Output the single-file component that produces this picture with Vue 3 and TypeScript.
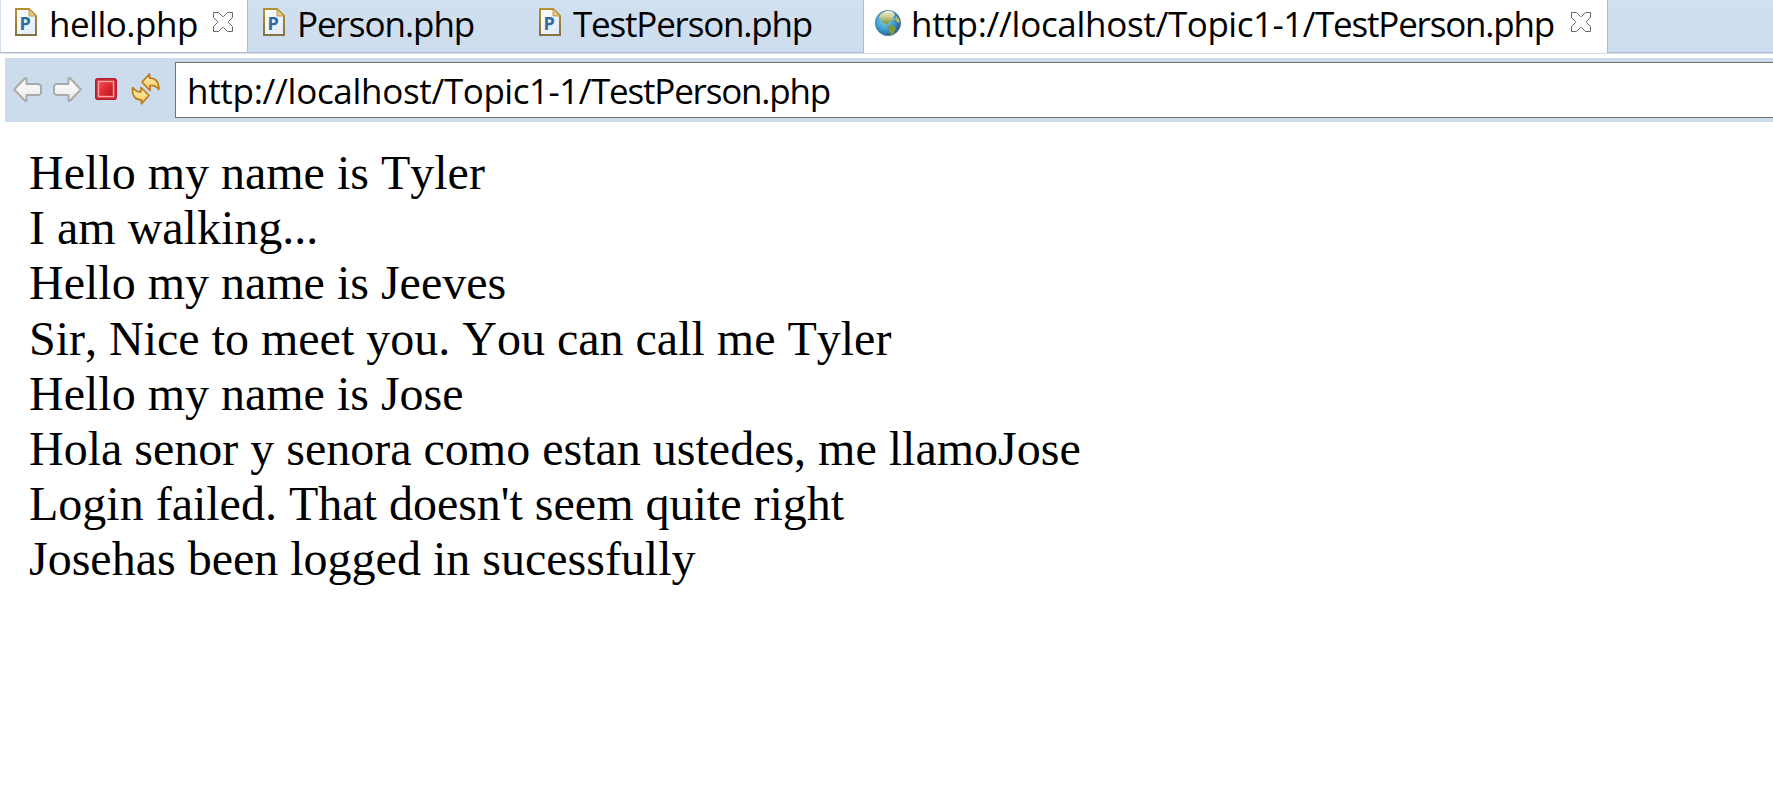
<script setup lang="ts">
interface Part {
  text: string
  cls: string
}
interface Tab {
  parts: Part[]
  kind: 'php' | 'web'
  cls: string
  closable: boolean
}

const url: Part[] = [
  { text: 'http://localhost/', cls: 'host' },
  { text: 'Topic1-1/', cls: 'folder' },
  { text: 'TestPerson.php', cls: 'script' },
]

const tabs: Tab[] = [
  { parts: [{ text: 'hello.php', cls: 'folder' }], kind: 'php', cls: 'hello', closable: true },
  { parts: [{ text: 'Person.php', cls: 'short' }], kind: 'php', cls: 'person', closable: false },
  { parts: [{ text: 'TestPerson.php', cls: 'script' }], kind: 'php', cls: 'test', closable: false },
  { parts: url, kind: 'web', cls: 'browser', closable: true },
]

const output: string[] = [
  'Hello my name is Tyler',
  'I am walking...',
  'Hello my name is Jeeves',
  'Sir, Nice to meet you. You can call me Tyler',
  'Hello my name is Jose',
  'Hola senor y senora como estan ustedes, me llamoJose',
  "Login failed. That doesn't seem quite right",
  'Josehas been logged in sucessfully',
]
</script>

<template>
  <div class="window">
    <svg class="defs" width="0" height="0" aria-hidden="true">
      <defs>
        <linearGradient id="page" x1="0" y1="0" x2="1" y2="1">
          <stop offset="0" stop-color="#fff" /><stop offset="1" stop-color="#dfe9f8" />
        </linearGradient>
        <linearGradient id="edge" x1="0" y1="0" x2="0" y2="1">
          <stop offset="0" stop-color="#b8902f" /><stop offset="1" stop-color="#857440" />
        </linearGradient>
        <radialGradient id="sea" cx=".38" cy=".4" r=".65">
          <stop offset="0" stop-color="#8fd3ee" /><stop offset=".55" stop-color="#3e9fd0" /><stop offset="1" stop-color="#28598f" />
        </radialGradient>
        <linearGradient id="land" x1="0" y1="0" x2="0" y2="1">
          <stop offset="0" stop-color="#f2f1dd" /><stop offset=".45" stop-color="#c9cb91" /><stop offset="1" stop-color="#6d8b2c" />
        </linearGradient>
        <linearGradient id="arrow" x1="0" y1="0" x2="0" y2="1">
          <stop offset="0" stop-color="#fff" /><stop offset="1" stop-color="#e9e9e9" />
        </linearGradient>
        <linearGradient id="red" x1="0" y1="0" x2="1" y2="1">
          <stop offset="0" stop-color="#f04a50" /><stop offset=".5" stop-color="#e02a34" /><stop offset="1" stop-color="#b5141f" />
        </linearGradient>
        <linearGradient id="gold" x1="0" y1="0" x2="0" y2="1">
          <stop offset="0" stop-color="#fff3c4" /><stop offset="1" stop-color="#f8c64c" />
        </linearGradient>
      </defs>
    </svg>

    <nav class="tabs">
      <div v-for="tab in tabs" :key="tab.cls" class="tab" :class="tab.cls">
        <svg v-if="tab.kind === 'php'" class="file" width="22" height="28" viewBox="0 0 22 28">
          <path d="M1 1H14L21 8V27H1Z" fill="url(#page)" stroke="url(#edge)" stroke-width="2" />
          <path d="M14 1L21 8H14Z" fill="#e5c88c" stroke="#b8902f" stroke-width=".8" />
          <text x="4.4" y="21.6" class="glyph">P</text>
        </svg>
        <svg v-else class="globe" width="26" height="26" viewBox="0 0 26 26">
          <circle cx="13" cy="13" r="12.6" fill="url(#sea)" stroke="#4b7396" stroke-width=".8" />
          <path d="M5 5Q9 1 14 .8L18 2L20 5L18 8L20 10L16 11L13 13L12 15L9 13L6 12L7 9L4 8Z" fill="url(#land)" />
          <path d="M13 16L17 15L21 18L19 23L16 25L14 21Z" fill="#7d9b34" />
          <path d="M21 6L24 9L25 13L22 12L20 9Z" fill="#b3b86c" />
        </svg>
        <span class="label"><span v-for="part in tab.parts" :key="part.text" :class="part.cls">{{ part.text }}</span></span>
        <svg v-if="tab.closable" class="close" width="20" height="20" viewBox="0 0 20 20">
          <path d="M.5 .5H5.5L9.5 4.5H10.5L14.5 .5H19.5V5.5L15.5 9.5V10.5L19.5 14.5V19.5H14.5L10.5 15.5H9.5L5.5 19.5H.5V14.5L4.5 10.5V9.5L.5 5.5Z" />
        </svg>
      </div>
      <div class="rest"></div>
    </nav>

    <div class="toolbar">
      <svg class="back" width="29" height="25" viewBox="0 0 29 25">
        <path d="M1.2 12.5L12 1.2H13.5V7H26L28 8.8V16.5L26 18H13.5V23.8H12Z" class="nav" />
      </svg>
      <svg class="forward" width="29" height="25" viewBox="0 0 29 25">
        <path d="M27.8 12.5L17 1.2H15.5V7H3L1 8.8V16.5L3 18H15.5V23.8H17Z" class="nav" />
      </svg>
      <svg class="stop" width="22" height="22" viewBox="0 0 22 22">
        <rect x=".8" y=".8" width="20.4" height="20.4" rx="2" fill="#d9343f" stroke="#b3202b" stroke-width="1.6" />
        <rect x="3.5" y="3.5" width="15" height="15" fill="url(#red)" stroke="#f5a3a6" stroke-width="1.4" />
      </svg>
      <svg class="refresh" width="30" height="32" viewBox="0 0 30 32">
        <path d="M11 9L18.5 1V5.2C24 4.8 28.5 8.5 27.8 16.5C25.5 13 22.5 12.2 19 12.6V17.5Z" class="gold" />
        <path d="M1.8 14.5C4 18 6.5 19 10 18.8V14.5L18 22.5L10.5 30.8V26.8C4.5 27.3 .2 22.5 1.8 14.5Z" class="gold" />
      </svg>
      <div class="address">
        <span class="label"><span v-for="part in url" :key="part.text" :class="part.cls">{{ part.text }}</span></span>
      </div>
    </div>

    <main class="output">
      <div v-for="line in output" :key="line" class="line">{{ line }}</div>
    </main>
  </div>
</template>

<style>
body { background: #fff; overflow: hidden; }
</style>

<style scoped>
.window { width: 1773px; height: 788px; background: #fff; overflow: hidden; }
.defs { display: block; }
svg { display: block; flex: none; }
.tabs { display: flex; height: 54px; box-sizing: border-box; border-bottom: 1px solid #d2deec; }
.tab, .rest {
  display: flex; box-sizing: border-box; height: 53px; flex: none;
  border-bottom: 1px solid #b5b9cd; background: linear-gradient(#d1e0ef, #cedded);
}
.hello { width: 248px; padding-left: 14px; background: #fff; border-left: 1px solid #d2deec; border-right: 1px solid #b5b9cd; }
.person { width: 276px; padding-left: 15px; }
.test { width: 340px; padding-left: 15px; border-right: 1px solid #b5b9cd; }
.browser { width: 743px; padding-left: 11px; background: #fff; border-bottom-color: #fff; }
.rest { flex: 1; border-left: 1px solid #b5b9cd; }
.file { margin-top: 8px; }
.globe { margin-top: 10px; }
.close { margin-top: 12px; }
.close path { fill: #fff; stroke: #666; stroke-width: 1; }
.glyph { font: bold 18px "Open Sans", sans-serif; fill: #316b9e; }
.label {
  font: 35px/48px "Open Sans", "Noto Sans", sans-serif; color: #000; white-space: nowrap;
  flex: none;
}
.host { letter-spacing: -0.3px; }
.folder { letter-spacing: -0.5px; }
.script { letter-spacing: -1.2px; }
.short { letter-spacing: -1.05px; }
.tab .label { margin-left: 12px; }
.hello .label { width: 151px; margin-right: 13px; }
.browser .label { width: 650px; margin-left: 10px; margin-right: 10px; }
.toolbar {
  display: flex; margin: 4px 0 0 5px; height: 64px; box-sizing: border-box;
  background: #cddcec; padding: 4px 0 4px 8px;
}
.back { margin-top: 15px; }
.forward { margin: 15px 0 0 11px; }
.stop { margin: 16px 0 0 13px; }
.refresh { margin: 11px 0 0 14px; }
.nav { fill: url(#arrow); stroke: #aaa; stroke-width: 2; stroke-linejoin: round; }
.gold { fill: url(#gold); stroke: #b87c18; stroke-width: 1.7; stroke-linejoin: round; }
.address {
  margin-left: 14px; width: 1620px; flex: none; height: 56px; box-sizing: border-box;
  border: 1px solid #707070; background: #fff; padding: 4px 0 0 11px; display: flex;
}
.output {
  padding: 23px 0 0 29px; font-family: "Liberation Serif", "Times New Roman", serif;
  font-size: 48px; font-kerning: none; color: #000;
}
.line { line-height: 55.2px; white-space: nowrap; }
</style>
